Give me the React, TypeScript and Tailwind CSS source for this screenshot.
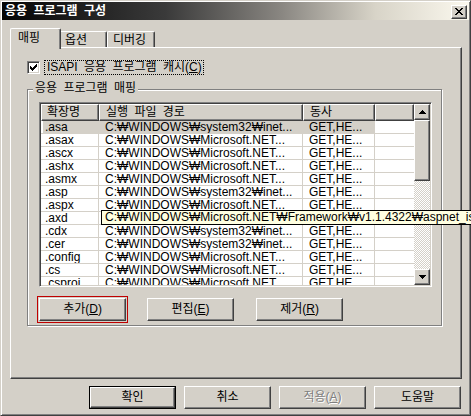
import React from "react";

const raised =
  "bg-[#d4d0c8] border border-t-white border-l-white border-r-[#404040] border-b-[#404040] shadow-[inset_-1px_-1px_0_#808080]";
const sunken =
  "border border-t-[#808080] border-l-[#808080] border-r-white border-b-white shadow-[inset_1px_1px_0_#404040,inset_-1px_-1px_0_#d4d0c8]";

const rows = [
  { ext: ".asa", path: "C:₩WINDOWS₩system32₩inet...", sel: true },
  { ext: ".asax", path: "C:₩WINDOWS₩Microsoft.NET..." },
  { ext: ".ascx", path: "C:₩WINDOWS₩Microsoft.NET..." },
  { ext: ".ashx", path: "C:₩WINDOWS₩Microsoft.NET..." },
  { ext: ".asmx", path: "C:₩WINDOWS₩Microsoft.NET..." },
  { ext: ".asp", path: "C:₩WINDOWS₩system32₩inet..." },
  { ext: ".aspx", path: "C:₩WINDOWS₩Microsoft.NET..." },
  { ext: ".axd", path: "C:₩WINDOWS₩Microsoft.NET..." },
  { ext: ".cdx", path: "C:₩WINDOWS₩system32₩inet..." },
  { ext: ".cer", path: "C:₩WINDOWS₩system32₩inet..." },
  { ext: ".config", path: "C:₩WINDOWS₩Microsoft.NET..." },
  { ext: ".cs", path: "C:₩WINDOWS₩Microsoft.NET..." },
  { ext: ".csproj", path: "C:₩WINDOWS₩Microsoft.NET..." },
];

function Button({
  children,
  disabled,
  isDefault,
  focus,
}: {
  children: React.ReactNode;
  disabled?: boolean;
  isDefault?: boolean;
  focus?: boolean;
}) {
  return (
    <div
      className={`h-[23px] w-[87px] shrink-0 ${isDefault ? "border border-black" : ""} ${
        focus ? "outline outline-1 outline-offset-1 outline-[#c00000]" : ""
      }`}
    >
      <div
        className={`${raised} h-full w-full flex items-center justify-center ${
          disabled ? "text-[#808080] [text-shadow:1px_1px_0_#fff]" : ""
        }`}
      >
        {children}
      </div>
    </div>
  );
}

function Arrow({ down }: { down?: boolean }) {
  return (
    <div className={`${raised} h-[16px] w-[16px] flex items-center justify-center`}>
      <svg width="7" height="4" viewBox="0 0 7 4" shapeRendering="crispEdges">
        {down ? (
          <path d="M0 0h7v1h-7zM1 1h5v1h-5zM2 2h3v1h-3zM3 3h1v1h-1z" fill="#000" />
        ) : (
          <path d="M3 0h1v1h-1zM2 1h3v1h-3zM1 2h5v1h-5zM0 3h7v1h-7z" fill="#000" />
        )}
      </svg>
    </div>
  );
}

export default function App() {
  return (
    <div className="relative w-[471px] h-[416px] overflow-hidden bg-[#d4d0c8] text-black text-[12px] leading-[13px] [word-spacing:3px] font-['Liberation_Sans','Noto_Sans_CJK_KR',sans-serif]">
      {/* window frame */}
      <div className="h-full flex flex-col border border-t-[#d4d0c8] border-l-[#d4d0c8] border-r-[#404040] border-b-[#404040] p-[1px] shadow-[inset_1px_1px_0_#fff,inset_-1px_-1px_0_#808080]">
        {/* title bar */}
        <div className="h-[18px] shrink-0 flex items-center justify-between pl-[3px] pr-[2px] bg-[linear-gradient(to_right,#050505,#3a3a3a_35%,#8a8782_60%,#d8d4c8_80%,#fbf8ee)]">
          <span className="text-white font-bold">응용 프로그램 구성</span>
          <div className={`${raised} h-[14px] w-[16px] flex items-center justify-center mt-[1px]`}>
            <svg width="8" height="7" viewBox="0 0 8 7" shapeRendering="crispEdges">
              <path
                d="M0 0h2v1h-2zM6 0h2v1h-2zM1 1h2v1h-2zM5 1h2v1h-2zM2 2h4v1h-4zM3 3h2v1h-2zM2 4h4v1h-4zM1 5h2v1h-2zM5 5h2v1h-2zM0 6h2v1h-2zM6 6h2v1h-2z"
                fill="#000"
              />
            </svg>
          </div>
        </div>

        {/* body */}
        <div className="flex-1 flex flex-col pl-[8px] pr-[7px] pt-[8px]">
          {/* tabs */}
          <div className="relative z-10 h-[19px] flex items-end">
            <div className="h-[21px] w-[51px] -mb-[2px] bg-[#d4d0c8] border-t border-l border-t-white border-l-white border-r border-r-[#404040] shadow-[inset_-1px_0_0_#808080] rounded-tl-[2px] rounded-tr-[2px] pl-[7px] pt-[3px]">
              매핑
            </div>
            <div className="h-[16px] w-[46px] bg-[#d4d0c8] border-t border-t-white border-r border-r-[#404040] shadow-[inset_-1px_0_0_#808080] rounded-tr-[2px] pl-[4px] pt-[2px]">
              옵션
            </div>
            <div className="h-[16px] w-[48px] bg-[#d4d0c8] border-t border-l border-t-white border-l-white border-r border-r-[#404040] shadow-[inset_-1px_0_0_#808080] rounded-tl-[2px] rounded-tr-[2px] pl-[5px] pt-[2px]">
              디버깅
            </div>
          </div>

          {/* tab panel */}
          <div className={`${raised} h-[332px] pl-[16px] pt-[12px]`}>
            <div className="h-[15px] flex items-center">
              <div className={`${sunken} h-[13px] w-[13px] bg-white flex items-center justify-center`}>
                <svg width="7" height="7" viewBox="0 0 7 7" shapeRendering="crispEdges">
                  <path
                    d="M6 0h1v1h-1zM5 1h2v1h-2zM0 2h1v1h-1zM4 2h3v1h-3zM0 3h2v1h-2zM3 3h3v1h-3zM0 4h5v1h-5zM1 5h3v1h-3zM2 6h1v1h-1z"
                    fill="#000"
                  />
                </svg>
              </div>
              <div className="ml-[4px] h-[15px] border border-dotted border-black pl-[2px] pr-[1px] flex items-center whitespace-nowrap">
                ISAPI 응용 프로그램 캐시(<span className="underline underline-offset-1">C</span>)
              </div>
            </div>

            {/* group box */}
            <div className="relative mt-[14px] h-[237px] w-[415px] border border-[#808080] shadow-[1px_1px_0_#fff,inset_1px_1px_0_#fff] pl-[11px] pt-[12px]">
              <span className="absolute left-[5px] -top-[8px] px-[2px] bg-[#d4d0c8] whitespace-nowrap">응용 프로그램 매핑</span>

              {/* list view */}
              <div className="relative">
                <div className={`${sunken} h-[185px] w-[393px] p-[1px] flex bg-white`}>
                  <div className="flex-1 overflow-hidden">
                    <div className="h-[17px] flex whitespace-nowrap">
                      <div className={`${raised} w-[58px] shrink-0 pl-[5px] flex items-center`}>확장명</div>
                      <div className={`${raised} w-[204px] shrink-0 pl-[6px] flex items-center`}>실행 파일 경로</div>
                      <div className={`${raised} w-[72px] shrink-0 pl-[6px] flex items-center`}>동사</div>
                      <div className={`${raised} flex-1`} />
                    </div>
                    {rows.map((r) => (
                      <div key={r.ext} className="h-[13px] flex border-b border-[#d4d0c8] whitespace-nowrap">
                        <div
                          className={`w-[58px] shrink-0 pl-[4px] border-r border-[#d4d0c8] overflow-hidden ${
                            r.sel ? "bg-[#d4d0c8] shadow-[inset_2px_0_0_#fff]" : ""
                          }`}
                        >
                          {r.ext}
                        </div>
                        <div
                          className={`w-[204px] shrink-0 pl-[6px] border-r border-[#d4d0c8] overflow-hidden ${
                            r.sel ? "bg-[#d4d0c8]" : ""
                          }`}
                        >
                          {r.path}
                        </div>
                        <div
                          className={`w-[72px] shrink-0 pl-[6px] border-r border-[#d4d0c8] overflow-hidden ${
                            r.sel ? "bg-[#d4d0c8]" : ""
                          }`}
                        >
                          GET,HE...
                        </div>
                        <div className="flex-1" />
                      </div>
                    ))}
                  </div>
                  {/* scrollbar */}
                  <div className="w-[16px] shrink-0 flex flex-col">
                    <Arrow />
                    <div className={`${raised} h-[61px] shrink-0`} />
                    <div className="flex-1 bg-[repeating-conic-gradient(#ffffff_0%_25%,#d4d0c8_0%_50%)] bg-[length:2px_2px]" />
                    <Arrow down />
                  </div>
                </div>

                {/* tooltip */}
                <div className="absolute z-20 left-[62px] top-[108px] h-[15px] border border-black bg-[#ffffe1] pl-[3px] pr-[3px] whitespace-nowrap flex items-center">
                  C:₩WINDOWS₩Microsoft.NET₩Framework₩v1.1.4322₩aspnet_isapi.dll
                </div>
              </div>

              {/* list buttons */}
              <div className="mt-[11px] flex">
                <Button focus>
                  추가(<span className="underline underline-offset-1">D</span>)
                </Button>
                <div className="ml-[21px]">
                  <Button>
                    편집(<span className="underline underline-offset-1">E</span>)
                  </Button>
                </div>
                <div className="ml-[22px]">
                  <Button>
                    제거(<span className="underline underline-offset-1">R</span>)
                  </Button>
                </div>
              </div>
            </div>
          </div>

          {/* dialog buttons */}
          <div className="mt-[7px] pr-[1px] flex justify-end gap-[8px]">
            <Button isDefault>확인</Button>
            <Button>취소</Button>
            <Button disabled>
              적용(<span className="underline underline-offset-1">A</span>)
            </Button>
            <Button>도움말</Button>
          </div>
        </div>
      </div>
    </div>
  );
}
